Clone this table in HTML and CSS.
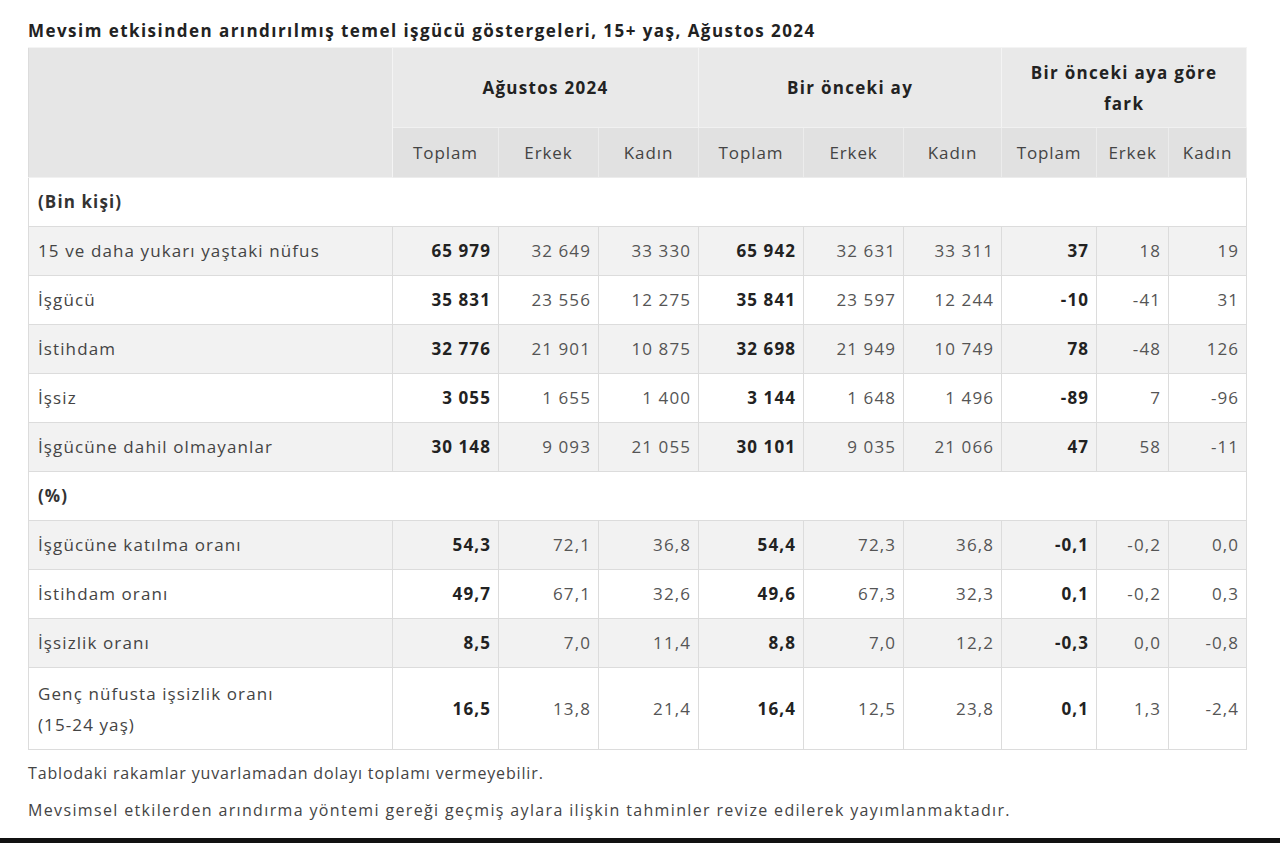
FILE: index.html
```html
<!DOCTYPE html>
<html lang="tr">
<head>
<meta charset="utf-8">
<title>Temel işgücü göstergeleri</title>
<link rel="stylesheet" href="styles.css">
</head>
<body>
<div class="page">
  <h1 class="title">Mevsim etkisinden arındırılmış temel işgücü göstergeleri, 15+ yaş, Ağustos 2024</h1>
  <table class="tbl">
    <colgroup>
      <col class="c-label"><col class="c1"><col class="c2"><col class="c3"><col class="c4"><col class="c5"><col class="c6"><col class="c7"><col class="c8"><col class="c9">
    </colgroup>
    <thead>
      <tr class="h1">
        <th rowspan="2" class="corner"></th>
        <th colspan="3">Ağustos 2024</th>
        <th colspan="3">Bir önceki ay</th>
        <th colspan="3">Bir önceki aya göre<br>fark</th>
      </tr>
      <tr class="h2">
        <th>Toplam</th><th>Erkek</th><th>Kadın</th>
        <th>Toplam</th><th>Erkek</th><th>Kadın</th>
        <th>Toplam</th><th>Erkek</th><th>Kadın</th>
      </tr>
    </thead>
    <tbody>
      <tr class="sec"><td colspan="10">(Bin kişi)</td></tr>
      <tr class="odd"><td class="lbl">15 ve daha yukarı yaştaki nüfus</td><td class="b">65 979</td><td>32 649</td><td>33 330</td><td class="b">65 942</td><td>32 631</td><td>33 311</td><td class="b">37</td><td>18</td><td>19</td></tr>
      <tr><td class="lbl">İşgücü</td><td class="b">35 831</td><td>23 556</td><td>12 275</td><td class="b">35 841</td><td>23 597</td><td>12 244</td><td class="b">-10</td><td>-41</td><td>31</td></tr>
      <tr class="odd"><td class="lbl">İstihdam</td><td class="b">32 776</td><td>21 901</td><td>10 875</td><td class="b">32 698</td><td>21 949</td><td>10 749</td><td class="b">78</td><td>-48</td><td>126</td></tr>
      <tr><td class="lbl">İşsiz</td><td class="b">3 055</td><td>1 655</td><td>1 400</td><td class="b">3 144</td><td>1 648</td><td>1 496</td><td class="b">-89</td><td>7</td><td>-96</td></tr>
      <tr class="odd"><td class="lbl">İşgücüne dahil olmayanlar</td><td class="b">30 148</td><td>9 093</td><td>21 055</td><td class="b">30 101</td><td>9 035</td><td>21 066</td><td class="b">47</td><td>58</td><td>-11</td></tr>
      <tr class="sec"><td colspan="10">(%)</td></tr>
      <tr class="odd"><td class="lbl">İşgücüne katılma oranı</td><td class="b">54,3</td><td>72,1</td><td>36,8</td><td class="b">54,4</td><td>72,3</td><td>36,8</td><td class="b">-0,1</td><td>-0,2</td><td>0,0</td></tr>
      <tr><td class="lbl">İstihdam oranı</td><td class="b">49,7</td><td>67,1</td><td>32,6</td><td class="b">49,6</td><td>67,3</td><td>32,3</td><td class="b">0,1</td><td>-0,2</td><td>0,3</td></tr>
      <tr class="odd"><td class="lbl">İşsizlik oranı</td><td class="b">8,5</td><td>7,0</td><td>11,4</td><td class="b">8,8</td><td>7,0</td><td>12,2</td><td class="b">-0,3</td><td>0,0</td><td>-0,8</td></tr>
      <tr class="tall"><td class="lbl">Genç nüfusta işsizlik oranı<br>(15-24 yaş)</td><td class="b">16,5</td><td>13,8</td><td>21,4</td><td class="b">16,4</td><td>12,5</td><td>23,8</td><td class="b">0,1</td><td>1,3</td><td>-2,4</td></tr>
    </tbody>
  </table>
  <p class="note">Tablodaki rakamlar yuvarlamadan dolayı toplamı vermeyebilir.</p>
  <p class="note note2">Mevsimsel etkilerden arındırma yöntemi gereği geçmiş aylara ilişkin tahminler revize edilerek yayımlanmaktadır.</p>
</div>
<div class="bottom-bar"></div>
</body>
</html>
```

FILE: styles.css
```css
html, body {
  margin: 0;
  padding: 0;
  background: #ffffff;
}
body {
  font-family: "Open Sans", "Noto Sans", "DejaVu Sans", sans-serif;
  color: #444;
  height: 843px;
  display: flex;
  flex-direction: column;
  overflow: hidden;
}
.page {
  flex: 1;
  padding: 20px 0 0 28px;
}
.title {
  margin: 0 0 5px 0;
  font-size: 17px;
  line-height: 22px;
  font-weight: 700;
  color: #222;
  letter-spacing: 1.45px;
}
.tbl {
  border-collapse: collapse;
  table-layout: fixed;
  width: 1218px;
  font-size: 17px;
  letter-spacing: 1.1px;
}
.c-label { width: 364px; }
.c1 { width: 106px; }
.c2 { width: 100px; }
.c3 { width: 100px; }
.c4 { width: 105px; }
.c5 { width: 100px; }
.c6 { width: 98px; }
.c7 { width: 95px; }
.c8 { width: 72px; }
.c9 { width: 78px; }

.tbl th, .tbl td {
  border: 1px solid #dcdcdc;
  padding: 0 7px;
}
.tbl thead th {
  background: #e9e9e9;
  color: #222;
  font-weight: 700;
  text-align: center;
  line-height: 31px;
  letter-spacing: 1.3px;
}
.tbl .h1 th {
  height: 79px;
  border-color: #f4f4f4;
  border-bottom-color: #f1f1f1;
}
.tbl .h1 th.corner {
  background: #e6e6e6;
  border-left-color: #dcdcdc;
}
.tbl .h2 th {
  height: 49px;
  background: #e1e1e1;
  color: #444;
  font-weight: 400;
  border-color: #ececec;
  padding: 0 2px;
  letter-spacing: 0.9px;
}
.tbl tbody td {
  height: 48px;
  text-align: right;
  color: #555;
  line-height: 24px;
}
.tbl tbody tr.odd td {
  background: #f2f2f2;
}
.tbl tbody td.lbl {
  text-align: left;
  padding-left: 9px;
  color: #444;
}
.tbl tbody td.b {
  font-weight: 700;
  color: #222;
}
.tbl tbody tr.sec td {
  text-align: left;
  font-weight: 700;
  color: #333;
  padding-left: 9px;
}
.tbl tbody tr.tall td {
  height: 81px;
  line-height: 31px;
}
.note {
  margin: 9px 0 0 0;
  font-size: 16px;
  line-height: 28px;
  color: #444;
  letter-spacing: 0.85px;
}
.note2 {
  margin-top: 9px;
  letter-spacing: 1.35px;
}
.bottom-bar {
  height: 5px;
  background: #111;
  flex: none;
}
```
